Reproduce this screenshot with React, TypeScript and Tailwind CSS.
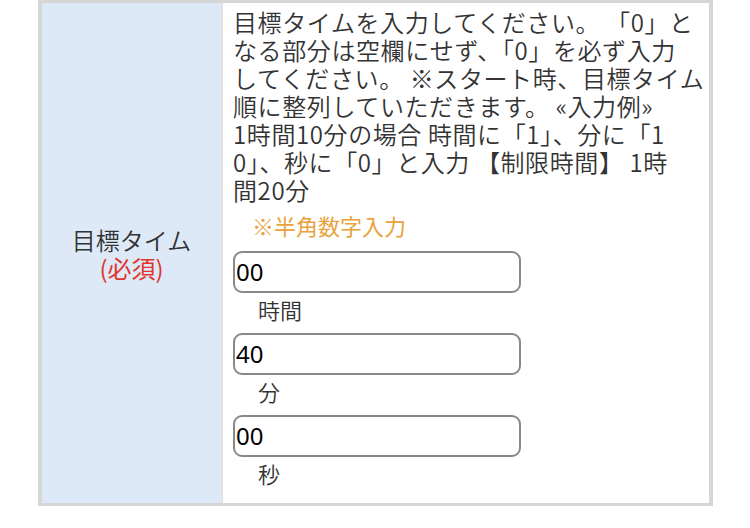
import React from 'react';

const jp = { fontFamily: '"Noto Sans CJK JP", "Noto Sans", sans-serif' };

const noteLines = [
  '目標タイムを入力してください。 「0」と',
  'なる部分は空欄にせず、「0」を必ず入力',
  'してください。 ※スタート時、目標タイム',
  '順に整列していただきます。 «入力例»',
  '1時間10分の場合 時間に「1」、分に「1',
  '0」、秒に「0」と入力 【制限時間】 1時',
  '間20分',
];

const fields = [
  { value: '00', unit: '時間' },
  { value: '40', unit: '分' },
  { value: '00', unit: '秒' },
];

export default function App() {
  return (
    <div className="w-[750px] h-[528px] bg-white pl-[38px] text-[#333] font-[350]" style={jp}>
      <div className="flex w-[675px] h-[506px] border-x-4 border-t-[3px] border-b-[3px] border-[#d6d6d6]">
        {/* label cell */}
        <div className="w-[179px] shrink-0 bg-[#dde9f7] flex flex-col items-center justify-center text-[24px] leading-[28px] pt-[2px]">
          <span>目標タイム</span>
          <span className="text-[#e2352b] font-normal">(必須)</span>
        </div>
        {/* value cell */}
        <div className="flex-1 border-l-2 border-[#e2e2e2] pl-[10px] pt-[5px] text-[24px] leading-[28px]">
          {noteLines.map((line, i) => (
            <div key={i} className="whitespace-pre tracking-[0.6px]">{line}</div>
          ))}
          <div className="pl-[19px] mt-[7px] text-[#e9a23b] font-normal text-[22px] leading-[28px]">※半角数字入力</div>
          <div className="mt-[12px]">
            {fields.map((f) => (
              <div key={f.unit} className="mb-[8px]">
                <div className="w-[288px] h-[42px] border-2 border-[#888] rounded-[9px] bg-white flex items-center pl-[1px] text-black text-[24px] font-normal" style={{ fontFamily: '"Noto Sans", sans-serif' }}>
                  {f.value}
                </div>
                <div className="pl-[25px] h-[32px] leading-[32px] text-[22px]">{f.unit}</div>
              </div>
            ))}
          </div>
        </div>
      </div>
    </div>
  );
}
